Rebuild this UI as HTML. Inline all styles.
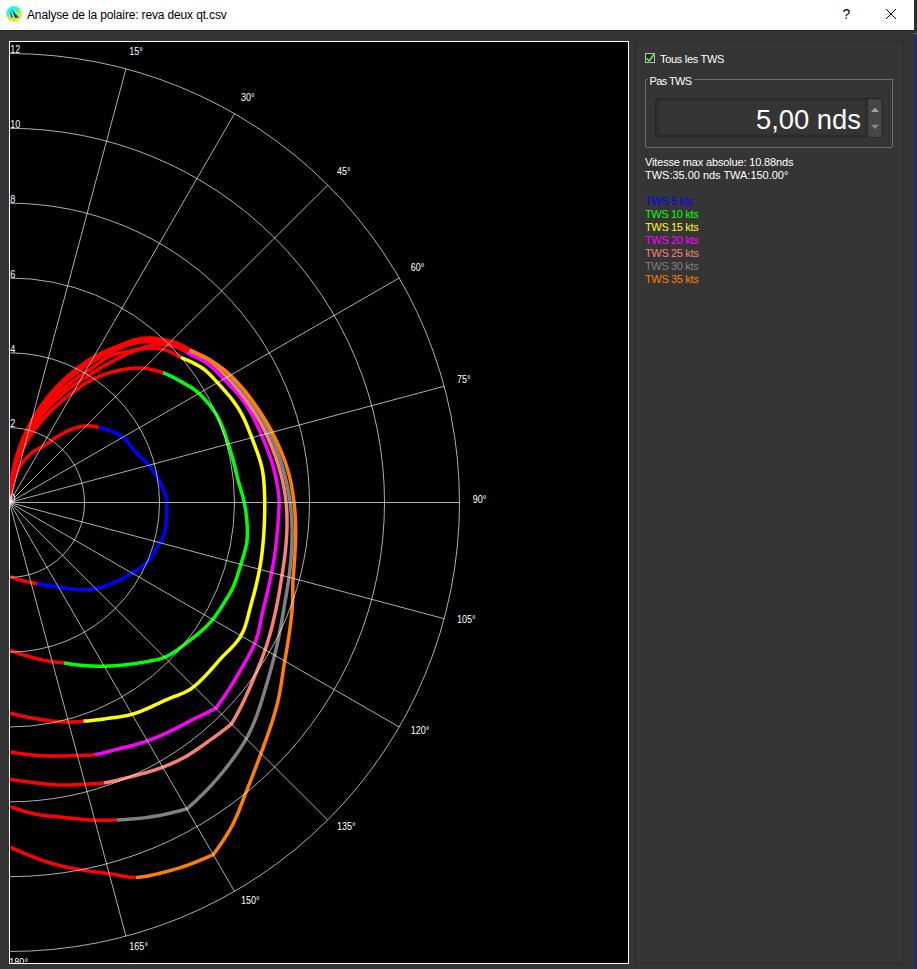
<!DOCTYPE html>
<html><head><meta charset="utf-8">
<style>
html,body{margin:0;padding:0;}
body{width:917px;height:969px;background:#353535;position:relative;overflow:hidden;font-family:"Liberation Sans",sans-serif;}
.abs{position:absolute;}
svg{position:absolute;left:0;top:0;}
svg text{font-family:"Liberation Sans",sans-serif;}
</style></head><body>
<!-- title bar -->
<div class="abs" style="left:0;top:0;width:914px;height:30px;background:#ffffff;"></div>
<div class="abs" style="left:0;top:30px;width:914px;height:1px;background:#2b2b2b;"></div>
<div class="abs" style="left:914px;top:0;width:3px;height:33px;background:#2e2e2e;"></div>
<div class="abs" style="left:914px;top:33px;width:3px;height:1px;background:#6e6e6e;"></div>
<div class="abs" style="left:914px;top:34px;width:1px;height:935px;background:#2d2c4a;"></div>
<div class="abs" style="left:915px;top:34px;width:2px;height:935px;background:#29297a;"></div>
<svg width="917" height="969" viewBox="0 0 917 969">
<defs>
<linearGradient id="ig" x1="0.2" y1="0.1" x2="0.6" y2="0.95">
<stop offset="0" stop-color="#00ffff"/><stop offset="0.35" stop-color="#40f0c0"/><stop offset="0.6" stop-color="#b0f040"/><stop offset="1" stop-color="#ffe000"/>
</linearGradient>
<clipPath id="cc"><rect x="10" y="42" width="618" height="921"/></clipPath>
</defs>
<circle cx="14" cy="14" r="7.7" fill="url(#ig)"/>
<path d="M11,8.8 Q14,12 19,17.8 L14.8,17.8 Q13,12 11,8.8 Z" fill="#0048e0"/>
<path d="M10,10.8 L13,17.4 L11,17.2 Q10.2,14 10,10.8 Z" fill="#0048e0"/>
<text x="27" y="19" font-size="12" fill="#000" style="letter-spacing:-0.15px">Analyse de la polaire: reva deux qt.csv</text>
<text x="842.6" y="19" font-size="14" fill="#000">?</text>
<path d="M886,9 L896,19 M896,9 L886,19" stroke="#000" stroke-width="1" fill="none"/>

<!-- chart -->
<rect x="9.5" y="41.5" width="619" height="922" fill="#000" stroke="#fff" stroke-width="1"/>
<g clip-path="url(#cc)">
<g stroke-width="3.5" fill="none" stroke-linejoin="round" stroke-linecap="butt">
<path d="M98.36,427.39 L99.34,427.62 L100.58,427.91 L101.83,428.22 L103.08,428.54 L104.34,428.87 L105.59,429.22 L106.85,429.59 L108.10,429.99 L109.34,430.40 L110.57,430.83 L111.79,431.29 L113.00,431.78 L114.19,432.29 L115.36,432.83 L116.50,433.40 L117.62,434.00 L118.71,434.63 L119.77,435.29 L120.80,435.99 L121.79,436.71 L122.17,437.01 L122.73,437.47 L123.64,438.26 L124.52,439.07 L125.38,439.91 L126.20,440.77 L127.00,441.64 L127.79,442.53 L128.56,443.44 L129.32,444.35 L130.07,445.28 L130.81,446.21 L131.56,447.15 L132.31,448.09 L133.07,449.03 L133.84,449.98 L134.62,450.92 L135.42,451.87 L136.08,452.62 L136.25,452.81 L137.12,453.74 L138.02,454.67 L138.96,455.60 L139.93,456.53 L140.91,457.46 L141.90,458.40 L142.90,459.35 L143.90,460.31 L144.90,461.29 L145.87,462.28 L146.83,463.29 L147.75,464.33 L148.29,464.95 L148.64,465.38 L149.53,466.44 L150.41,467.52 L151.29,468.60 L152.15,469.71 L153.00,470.82 L153.82,471.95 L154.63,473.10 L155.40,474.26 L156.15,475.43 L156.85,476.62 L157.12,477.10 L157.52,477.83 L158.19,479.04 L158.86,480.27 L159.52,481.50 L160.17,482.74 L160.81,484.00 L161.43,485.26 L162.04,486.53 L162.62,487.81 L163.17,489.11 L163.70,490.41 L164.19,491.72 L164.65,493.05 L165.07,494.38 L165.45,495.72 L165.78,497.06 L166.07,498.42 L166.30,499.77 L166.48,501.14 L166.60,502.50 L166.68,503.87 L166.74,505.23 L166.79,506.60 L166.81,507.97 L166.82,509.34 L166.81,510.71 L166.79,512.08 L166.74,513.45 L166.69,514.82 L166.61,516.19 L166.52,517.56 L166.42,518.93 L166.32,520.02 L166.30,520.30 L166.16,521.66 L166.02,523.03 L165.86,524.39 L165.69,525.75 L165.50,527.11 L165.30,528.47 L165.09,529.83 L164.85,531.18 L164.61,532.53 L164.34,533.88 L163.95,535.20 L163.38,536.48 L162.67,537.72 L161.88,538.94 L161.05,540.14 L160.24,541.33 L159.50,542.53 L159.36,542.77 L158.83,543.75 L158.18,544.96 L157.55,546.18 L156.92,547.39 L156.28,548.59 L155.65,549.79 L155.01,550.99 L154.36,552.17 L153.69,553.35 L153.00,554.51 L152.29,555.66 L151.55,556.80 L150.77,557.91 L149.96,559.01 L149.63,559.44 L149.11,560.08 L148.20,561.12 L147.24,562.13 L146.23,563.11 L145.18,564.06 L144.09,564.98 L142.97,565.88 L141.82,566.75 L140.65,567.59 L139.46,568.41 L138.26,569.22 L137.05,570.00 L135.83,570.77 L134.61,571.52 L133.40,572.26 L132.19,572.99 L131.00,573.72 L130.06,574.29 L129.82,574.44 L128.65,575.15 L127.47,575.84 L126.28,576.52 L125.10,577.18 L123.90,577.82 L122.71,578.46 L121.51,579.07 L120.31,579.67 L119.11,580.25 L117.90,580.82 L116.69,581.38 L115.49,581.91 L114.28,582.44 L113.31,582.85 L113.07,582.95 L111.87,583.45 L110.67,583.94 L109.47,584.41 L108.27,584.87 L107.07,585.32 L105.88,585.76 L104.68,586.17 L103.47,586.57 L102.27,586.95 L101.05,587.32 L99.83,587.65 L98.61,587.97 L97.37,588.26 L96.38,588.48 L96.13,588.53 L94.87,588.76 L93.61,588.97 L92.33,589.16 L91.06,589.31 L89.77,589.45 L88.49,589.56 L87.21,589.65 L85.92,589.72 L84.64,589.78 L83.37,589.82 L82.10,589.84 L80.84,589.85 L79.57,589.84 L78.31,589.80 L77.03,589.73 L75.76,589.63 L74.49,589.51 L73.22,589.37 L71.95,589.22 L70.70,589.04 L69.45,588.86 L68.22,588.66 L67.00,588.46 L65.79,588.26 L64.60,588.05 L63.43,587.85 L62.28,587.65 L61.15,587.46 L60.04,587.29 L58.96,587.13 L58.11,587.01 L57.90,586.99 L56.86,586.85 L55.82,586.71 L54.80,586.57 L53.79,586.43 L52.79,586.28 L51.80,586.13 L50.82,585.98 L49.85,585.83 L48.89,585.68 L47.94,585.52 L47.00,585.37 L46.06,585.21 L45.14,585.06 L44.23,584.90 L43.33,584.74 L42.43,584.59 L41.55,584.43 L40.67,584.27 L39.81,584.12 L38.95,583.97 L38.10,583.81 L37.26,583.66" stroke="#0000ff"/>
<path d="M162.64,372.68 L164.15,373.24 L166.01,373.98 L167.84,374.76 L169.65,375.59 L171.45,376.44 L173.22,377.33 L174.99,378.25 L176.74,379.19 L178.49,380.16 L180.24,381.14 L181.29,381.74 L182.00,382.14 L183.77,383.14 L185.56,384.15 L187.36,385.18 L189.14,386.23 L190.91,387.31 L192.64,388.44 L194.33,389.61 L195.96,390.83 L197.51,392.11 L198.98,393.45 L200.39,394.84 L201.79,396.24 L203.17,397.67 L204.53,399.12 L205.86,400.59 L207.17,402.09 L208.45,403.61 L209.70,405.15 L210.92,406.71 L212.11,408.30 L213.26,409.92 L214.37,411.55 L215.44,413.22 L216.47,414.90 L217.45,416.61 L218.39,418.35 L219.27,420.10 L219.78,421.17 L220.11,421.89 L220.91,423.68 L221.68,425.49 L222.42,427.31 L223.14,429.14 L223.84,430.98 L224.52,432.83 L225.17,434.69 L225.82,436.55 L226.45,438.41 L227.07,440.28 L227.69,442.16 L228.30,444.03 L228.91,445.91 L229.50,447.80 L230.08,449.69 L230.65,451.58 L231.20,453.48 L231.75,455.39 L232.29,457.30 L232.81,459.21 L233.33,461.13 L233.84,463.05 L234.34,464.98 L234.83,466.91 L235.31,468.84 L235.79,470.78 L236.26,472.73 L236.72,474.67 L237.18,476.63 L237.28,477.02 L237.65,478.58 L238.17,480.54 L238.71,482.50 L239.28,484.46 L239.87,486.43 L240.46,488.41 L241.06,490.40 L241.65,492.39 L242.22,494.39 L242.77,496.41 L243.29,498.43 L243.77,500.46 L244.20,502.50 L244.60,504.55 L244.99,506.60 L245.36,508.66 L245.71,510.73 L246.02,512.80 L246.30,514.88 L246.55,516.96 L246.74,519.05 L246.83,520.30 L246.89,521.14 L247.02,523.23 L247.14,525.32 L247.25,527.43 L247.33,529.53 L247.37,531.63 L247.37,533.74 L247.32,535.84 L247.21,537.94 L247.04,540.03 L246.79,542.11 L246.53,543.76 L246.45,544.18 L246.05,546.23 L245.58,548.27 L245.06,550.30 L244.50,552.32 L243.92,554.34 L243.31,556.34 L242.69,558.34 L242.07,560.34 L241.46,562.33 L240.86,564.33 L240.27,566.33 L239.68,568.33 L239.07,570.32 L238.45,572.31 L237.81,574.30 L237.16,576.28 L236.48,578.25 L235.79,580.21 L235.07,582.17 L234.33,584.11 L234.02,584.89 L233.55,586.04 L232.69,587.95 L231.77,589.82 L230.79,591.66 L229.76,593.49 L228.70,595.29 L227.61,597.08 L226.51,598.85 L225.41,600.62 L224.30,602.39 L224.09,602.74 L223.21,604.15 L222.11,605.91 L221.00,607.65 L219.88,609.39 L218.74,611.11 L217.58,612.82 L216.40,614.51 L215.19,616.18 L213.94,617.83 L212.66,619.45 L211.34,621.04 L209.98,622.60 L208.57,624.12 L207.12,625.61 L205.65,627.08 L204.14,628.51 L202.60,629.91 L201.04,631.29 L199.47,632.65 L197.88,633.98 L196.27,635.30 L194.66,636.59 L193.04,637.87 L191.42,639.14 L189.80,640.39 L188.19,641.64 L186.58,642.88 L184.98,644.12 L183.39,645.35 L181.79,646.56 L180.19,647.77 L178.57,648.95 L176.94,650.11 L175.29,651.24 L173.62,652.34 L171.93,653.40 L170.20,654.43 L168.44,655.41 L166.65,656.34 L164.81,657.21 L162.90,657.99 L160.89,658.65 L158.81,659.21 L156.68,659.69 L154.53,660.12 L152.39,660.53 L150.27,660.93 L149.02,661.18 L148.19,661.36 L146.12,661.76 L144.06,662.14 L141.99,662.50 L139.93,662.83 L137.88,663.14 L135.84,663.44 L133.80,663.71 L131.78,663.98 L129.78,664.23 L129.38,664.28 L127.78,664.48 L125.80,664.71 L123.83,664.92 L121.87,665.12 L119.92,665.31 L117.97,665.48 L116.04,665.63 L114.11,665.77 L112.19,665.88 L110.28,665.99 L108.38,666.07 L106.49,666.13 L104.60,666.18 L102.72,666.21 L100.85,666.22 L98.99,666.21 L97.13,666.19 L95.29,666.15 L93.46,666.10 L91.63,666.03 L89.82,665.94 L88.01,665.85 L86.22,665.74 L85.15,665.67 L84.44,665.62 L82.66,665.47 L80.89,665.30 L79.12,665.11 L77.37,664.90 L75.62,664.67 L73.89,664.44 L72.17,664.20 L70.47,663.96 L68.78,663.71 L67.10,663.47 L65.45,663.24 L63.81,663.02" stroke="#00ff00"/>
<path d="M180.76,357.26 L182.33,357.99 L184.34,358.87 L186.40,359.74 L188.46,360.63 L190.49,361.56 L191.69,362.15 L192.48,362.56 L194.46,363.57 L196.45,364.61 L198.42,365.68 L200.34,366.80 L202.20,367.99 L203.97,369.26 L204.65,369.79 L205.63,370.61 L207.23,372.02 L208.78,373.47 L210.29,374.97 L211.76,376.49 L213.21,378.04 L214.64,379.60 L216.07,381.17 L217.51,382.75 L218.96,384.33 L220.42,385.92 L221.87,387.52 L223.33,389.13 L224.77,390.75 L226.21,392.39 L227.63,394.04 L229.04,395.72 L230.43,397.41 L231.79,399.12 L233.13,400.86 L234.43,402.62 L235.70,404.41 L236.94,406.21 L238.13,408.05 L239.27,409.91 L240.36,411.80 L240.79,412.56 L241.41,413.71 L242.41,415.64 L243.38,417.59 L244.32,419.56 L245.22,421.54 L246.10,423.53 L246.96,425.54 L247.80,427.55 L248.62,429.58 L249.42,431.61 L250.21,433.65 L251.00,435.69 L251.77,437.74 L252.56,439.80 L253.34,441.85 L254.14,443.91 L254.92,445.98 L255.71,448.05 L256.48,450.13 L257.24,452.22 L257.97,454.32 L258.69,456.43 L259.37,458.55 L260.02,460.68 L260.64,462.82 L261.21,464.97 L261.74,467.13 L262.22,469.31 L262.64,471.49 L263.00,473.69 L263.30,475.89 L263.44,477.21 L263.53,478.10 L263.73,480.31 L263.92,482.52 L264.08,484.74 L264.23,486.96 L264.35,489.18 L264.46,491.39 L264.54,493.61 L264.61,495.84 L264.66,498.06 L264.69,500.28 L264.70,502.50 L264.70,504.72 L264.70,506.94 L264.69,509.17 L264.68,511.39 L264.65,513.61 L264.61,515.84 L264.55,518.06 L264.48,520.29 L264.39,522.51 L264.29,524.74 L264.18,526.97 L264.06,529.19 L263.93,531.42 L263.79,533.65 L263.64,535.88 L263.47,538.11 L263.29,540.34 L263.10,542.57 L262.89,544.80 L262.67,547.04 L262.43,549.27 L262.18,551.50 L261.91,553.73 L261.62,555.96 L261.32,558.19 L260.99,560.42 L260.65,562.65 L260.29,564.88 L259.91,567.10 L259.50,569.33 L259.08,571.55 L258.64,573.77 L258.19,575.99 L257.72,578.20 L257.23,580.42 L256.73,582.64 L256.22,584.85 L255.69,587.06 L255.15,589.28 L254.59,591.49 L254.02,593.70 L253.43,595.91 L252.83,598.12 L252.22,600.32 L251.60,602.53 L251.34,603.41 L250.97,604.74 L250.37,606.97 L249.80,609.22 L249.24,611.48 L248.68,613.75 L248.12,616.03 L247.53,618.30 L246.91,620.57 L246.26,622.83 L245.55,625.07 L244.78,627.28 L243.94,629.46 L243.02,631.61 L242.01,633.71 L240.90,635.75 L239.68,637.73 L238.36,639.65 L236.95,641.51 L235.46,643.32 L233.92,645.09 L232.33,646.82 L230.70,648.51 L229.05,650.18 L227.39,651.84 L225.73,653.49 L224.08,655.13 L222.46,656.79 L220.88,658.47 L219.34,660.18 L217.83,661.90 L216.33,663.62 L214.82,665.34 L213.31,667.06 L211.80,668.77 L210.27,670.47 L208.74,672.16 L207.19,673.83 L205.63,675.49 L204.05,677.14 L202.45,678.76 L200.83,680.36 L199.19,681.94 L197.52,683.49 L195.82,685.00 L194.09,686.49 L192.29,687.90 L190.39,689.20 L188.41,690.40 L186.35,691.51 L184.24,692.54 L182.09,693.51 L179.90,694.43 L177.70,695.30 L175.49,696.15 L173.29,696.98 L171.10,697.81 L168.94,698.66 L166.83,699.53 L164.75,700.45 L162.72,701.40 L160.69,702.35 L158.68,703.30 L156.68,704.24 L154.68,705.19 L152.68,706.12 L150.68,707.04 L148.67,707.94 L146.67,708.83 L144.65,709.69 L142.63,710.52 L140.59,711.33 L138.54,712.10 L136.48,712.83 L134.40,713.52 L132.30,714.16 L130.18,714.74 L128.04,715.26 L125.88,715.73 L123.70,716.15 L121.52,716.53 L119.33,716.88 L117.14,717.20 L114.96,717.50 L112.78,717.78 L110.62,718.06 L108.47,718.35 L106.33,718.64 L104.21,718.94 L102.10,719.23 L99.99,719.51 L97.89,719.78 L95.79,720.04 L93.70,720.29 L91.61,720.52 L89.53,720.73 L87.45,720.93 L85.37,721.11 L83.30,721.28" stroke="#ffff00"/>
<path d="M186.56,352.32 L188.05,353.18 L190.00,354.20 L192.02,355.18 L194.09,356.15 L196.18,357.12 L198.27,358.11 L200.34,359.14 L202.37,360.23 L204.33,361.39 L206.19,362.63 L206.55,362.89 L207.95,363.96 L209.67,365.34 L211.34,366.76 L212.97,368.23 L214.56,369.72 L216.14,371.24 L217.69,372.79 L219.23,374.35 L220.76,375.92 L222.29,377.51 L223.84,379.10 L225.39,380.70 L226.94,382.30 L228.50,383.92 L230.05,385.55 L231.59,387.20 L233.13,388.86 L234.65,390.54 L236.16,392.24 L237.65,393.96 L239.12,395.71 L240.55,397.48 L241.96,399.27 L243.34,401.08 L244.68,402.93 L245.98,404.80 L247.23,406.69 L247.96,407.84 L248.43,408.62 L249.60,410.56 L250.73,412.53 L251.83,414.52 L252.89,416.52 L253.93,418.54 L254.94,420.58 L255.93,422.63 L256.90,424.69 L257.85,426.76 L258.78,428.84 L259.71,430.93 L260.62,433.02 L261.53,435.13 L262.43,437.24 L263.33,439.36 L264.22,441.49 L265.10,443.63 L265.96,445.78 L266.81,447.93 L267.64,450.10 L268.46,452.28 L269.25,454.47 L270.02,456.67 L270.77,458.88 L271.49,461.10 L272.19,463.33 L272.86,465.57 L273.49,467.82 L274.09,470.09 L274.65,472.36 L275.18,474.64 L275.67,476.93 L276.14,479.22 L276.60,481.53 L277.04,483.83 L277.46,486.15 L277.85,488.47 L278.20,490.79 L278.50,493.13 L278.75,495.47 L278.94,497.81 L279.06,500.15 L279.10,502.50 L279.08,504.85 L279.01,507.19 L278.90,509.54 L278.77,511.88 L278.63,514.22 L278.47,516.56 L278.30,518.90 L278.21,520.31 L278.15,521.24 L277.98,523.58 L277.81,525.92 L277.63,528.26 L277.43,530.60 L277.23,532.94 L277.01,535.27 L276.79,537.61 L276.55,539.95 L276.29,542.28 L276.03,544.62 L275.75,546.95 L275.45,549.29 L275.14,551.62 L274.81,553.95 L274.47,556.29 L274.11,558.62 L273.73,560.95 L273.34,563.27 L272.93,565.60 L272.50,567.92 L272.05,570.24 L271.58,572.56 L271.09,574.88 L270.61,577.20 L270.12,579.52 L269.63,581.85 L269.13,584.17 L268.62,586.50 L268.11,588.83 L267.59,591.16 L267.06,593.50 L266.53,595.83 L265.98,598.17 L265.42,600.51 L264.85,602.85 L264.27,605.19 L263.67,607.53 L263.43,608.47 L263.07,609.88 L262.52,612.25 L262.00,614.65 L261.50,617.07 L261.02,619.50 L260.53,621.95 L260.04,624.41 L259.53,626.86 L259.00,629.32 L258.42,631.77 L257.79,634.20 L257.10,636.61 L256.34,638.99 L255.50,641.34 L254.58,643.65 L253.58,645.92 L252.54,648.17 L251.45,650.40 L250.33,652.61 L249.17,654.80 L247.99,656.98 L246.78,659.15 L245.55,661.31 L244.31,663.47 L243.06,665.62 L241.81,667.77 L240.55,669.93 L240.30,670.36 L239.29,672.09 L238.02,674.25 L236.75,676.41 L235.47,678.58 L234.17,680.73 L232.87,682.89 L231.55,685.05 L230.21,687.19 L228.86,689.34 L227.49,691.48 L226.10,693.60 L224.70,695.73 L223.27,697.84 L221.82,699.94 L220.35,702.02 L218.86,704.10 L217.34,706.16 L215.80,708.20 L213.47,709.45 L211.12,710.66 L208.75,711.83 L206.38,712.98 L204.00,714.11 L201.64,715.23 L199.29,716.34 L196.96,717.46 L194.66,718.59 L192.84,719.51 L192.39,719.74 L190.14,720.91 L187.92,722.09 L185.70,723.26 L183.50,724.44 L181.29,725.59 L179.07,726.74 L178.19,727.19 L176.85,727.85 L174.63,728.96 L172.42,730.06 L170.20,731.14 L167.98,732.21 L165.75,733.26 L163.52,734.29 L161.29,735.31 L159.04,736.30 L156.79,737.26 L154.54,738.20 L152.27,739.11 L149.99,739.99 L147.70,740.83 L145.40,741.64 L143.08,742.40 L140.75,743.12 L138.41,743.82 L136.06,744.48 L133.72,745.11 L131.37,745.72 L129.02,746.32 L126.67,746.90 L124.33,747.48 L122.00,748.05 L119.68,748.61 L117.36,749.19 L115.52,749.66 L115.06,749.77 L112.77,750.38 L110.50,750.99 L108.22,751.60 L105.95,752.20 L103.68,752.78 L101.40,753.33 L99.10,753.84 L96.80,754.29 L94.94,754.61 L94.48,754.68" stroke="#ff00ff"/>
<path d="M188.76,350.45 L190.48,351.15 L192.64,352.03 L194.81,352.93 L196.97,353.86 L199.11,354.83 L201.23,355.84 L203.31,356.91 L205.34,358.03 L207.30,359.22 L209.20,360.48 L210.30,361.27 L211.02,361.82 L212.78,363.21 L214.48,364.64 L216.15,366.12 L217.78,367.63 L219.38,369.17 L220.96,370.74 L222.51,372.33 L224.05,373.94 L225.59,375.57 L227.13,377.20 L228.66,378.85 L230.18,380.51 L231.69,382.19 L233.18,383.88 L234.66,385.60 L236.13,387.33 L237.59,389.08 L239.03,390.84 L240.45,392.63 L241.86,394.43 L243.26,396.24 L244.63,398.08 L245.99,399.93 L247.34,401.80 L248.67,403.68 L249.97,405.58 L251.26,407.50 L252.54,409.44 L253.79,411.39 L255.02,413.36 L256.23,415.34 L257.42,417.34 L258.60,419.35 L259.75,421.39 L260.87,423.43 L261.98,425.49 L263.06,427.57 L264.12,429.66 L265.16,431.77 L266.17,433.89 L267.16,436.02 L268.13,438.17 L269.09,440.32 L270.03,442.49 L270.95,444.67 L271.85,446.86 L272.72,449.07 L273.58,451.28 L274.42,453.51 L275.24,455.75 L276.03,458.00 L276.80,460.26 L277.55,462.53 L278.27,464.81 L278.97,467.10 L279.64,469.40 L280.29,471.72 L280.91,474.04 L281.51,476.37 L282.07,478.71 L282.61,481.05 L283.12,483.41 L283.60,485.77 L284.05,488.14 L284.47,490.52 L284.86,492.91 L285.22,495.30 L285.55,497.69 L285.84,500.09 L286.10,502.50 L286.33,504.91 L286.52,507.32 L286.68,509.74 L286.81,512.16 L286.91,514.59 L286.99,517.01 L287.03,519.44 L287.04,521.87 L287.03,524.29 L286.99,526.72 L286.93,529.16 L286.84,531.59 L286.72,534.02 L286.59,536.45 L286.43,538.88 L286.25,541.31 L286.06,543.74 L285.84,546.17 L285.60,548.60 L285.35,551.03 L285.08,553.46 L284.79,555.89 L284.49,558.32 L284.17,560.76 L283.84,563.19 L283.49,565.62 L283.14,568.05 L282.77,570.48 L282.40,572.92 L282.01,575.36 L281.62,577.80 L281.23,580.24 L280.84,582.70 L280.44,585.15 L280.04,587.61 L279.63,590.07 L279.21,592.54 L278.77,595.01 L278.32,597.48 L277.86,599.95 L277.37,602.43 L277.17,603.42 L276.86,604.90 L276.35,607.38 L275.83,609.86 L275.29,612.35 L274.74,614.84 L274.18,617.33 L273.61,619.82 L273.02,622.32 L272.41,624.82 L271.78,627.32 L271.14,629.82 L270.47,632.32 L269.78,634.82 L269.07,637.31 L268.34,639.81 L267.58,642.30 L266.80,644.79 L265.98,647.27 L265.14,649.75 L264.28,652.22 L263.38,654.69 L262.46,657.14 L261.51,659.60 L260.55,662.05 L259.56,664.50 L258.56,666.95 L257.55,669.41 L256.53,671.87 L255.50,674.33 L255.08,675.31 L254.46,676.80 L253.41,679.27 L252.35,681.76 L251.28,684.24 L250.20,686.73 L249.10,689.23 L247.99,691.73 L246.86,694.23 L245.72,696.73 L244.55,699.23 L243.36,701.72 L242.15,704.22 L240.91,706.71 L239.65,709.19 L238.37,711.67 L237.05,714.14 L235.71,716.59 L234.34,719.04 L232.93,721.48 L231.50,723.90 L229.38,725.64 L227.24,727.35 L225.08,729.04 L222.91,730.71 L220.73,732.36 L218.54,733.99 L216.34,735.61 L214.14,737.22 L211.93,738.81 L209.72,740.40 L207.96,741.67 L207.52,741.98 L205.31,743.57 L203.11,745.15 L200.90,746.72 L198.69,748.27 L196.46,749.81 L194.22,751.32 L191.96,752.80 L189.67,754.25 L187.36,755.65 L186.89,755.93 L185.02,757.00 L182.64,758.30 L180.23,759.53 L177.79,760.72 L175.33,761.86 L172.86,762.97 L170.37,764.03 L167.87,765.07 L165.36,766.08 L162.85,767.07 L160.33,768.03 L157.79,768.95 L155.24,769.82 L152.68,770.65 L150.11,771.45 L147.53,772.22 L144.95,772.96 L142.36,773.68 L139.78,774.38 L137.20,775.06 L134.62,775.74 L132.05,776.40 L129.49,777.07 L126.93,777.73 L124.38,778.40 L121.84,779.06 L119.30,779.71 L116.75,780.34 L114.21,780.94 L111.65,781.51 L109.09,782.03 L106.51,782.50 L103.93,782.92" stroke="#fa8072"/>
<path d="M189.21,350.06 L190.87,350.82 L192.97,351.75 L195.10,352.69 L197.25,353.63 L199.40,354.60 L201.54,355.60 L203.67,356.64 L205.76,357.72 L207.81,358.86 L209.79,360.06 L210.95,360.81 L211.72,361.33 L213.59,362.64 L215.44,364.00 L217.26,365.39 L219.04,366.81 L220.80,368.27 L222.52,369.76 L224.23,371.28 L225.91,372.83 L227.57,374.40 L229.20,376.00 L230.82,377.62 L232.43,379.26 L234.01,380.93 L235.58,382.61 L237.13,384.32 L238.66,386.04 L240.17,387.79 L241.66,389.56 L243.14,391.35 L244.59,393.15 L246.03,394.98 L247.44,396.83 L248.84,398.69 L250.22,400.58 L251.58,402.48 L252.91,404.40 L254.23,406.33 L255.53,408.29 L256.80,410.26 L258.06,412.25 L259.29,414.26 L260.51,416.28 L261.70,418.32 L262.87,420.37 L264.02,422.44 L265.15,424.52 L266.26,426.62 L267.34,428.74 L268.41,430.86 L269.45,433.01 L270.47,435.16 L271.47,437.33 L272.45,439.52 L273.40,441.71 L274.34,443.92 L275.25,446.14 L276.13,448.37 L277.00,450.62 L277.84,452.88 L278.66,455.15 L279.46,457.43 L280.23,459.72 L280.98,462.02 L281.71,464.33 L282.41,466.65 L283.09,468.98 L283.75,471.32 L284.38,473.67 L284.99,476.03 L285.58,478.40 L286.14,480.78 L286.68,483.16 L287.19,485.55 L287.68,487.95 L288.14,490.36 L288.58,492.78 L289.00,495.20 L289.39,497.62 L289.76,500.06 L290.10,502.50 L290.42,504.95 L290.70,507.40 L290.96,509.85 L291.19,512.32 L291.39,514.78 L291.57,517.25 L291.72,519.72 L291.84,522.20 L291.94,524.68 L292.01,527.16 L292.06,529.65 L292.08,532.14 L292.08,534.63 L292.06,537.12 L292.02,539.61 L291.95,542.11 L291.86,544.61 L291.75,547.11 L291.62,549.61 L291.47,552.11 L291.30,554.62 L291.11,557.12 L290.90,559.63 L290.67,562.14 L290.43,564.65 L290.17,567.16 L289.89,569.67 L289.60,572.19 L289.29,574.70 L288.96,577.22 L288.62,579.74 L288.25,582.26 L287.87,584.78 L287.47,587.30 L287.06,589.82 L286.63,592.35 L286.21,594.88 L285.78,597.42 L285.35,599.97 L284.92,602.53 L284.50,605.09 L284.07,607.67 L283.64,610.25 L283.20,612.84 L282.76,615.44 L282.32,618.05 L281.86,620.66 L281.39,623.29 L280.92,625.92 L280.43,628.56 L279.93,631.20 L279.41,633.85 L278.87,636.51 L278.32,639.17 L277.75,641.83 L277.16,644.50 L276.55,647.17 L275.92,649.85 L275.26,652.52 L274.58,655.20 L273.89,657.88 L273.19,660.58 L272.48,663.29 L271.77,666.01 L271.04,668.74 L270.30,671.48 L269.55,674.22 L268.77,676.98 L267.98,679.74 L267.16,682.50 L267.00,683.05 L266.34,685.27 L265.51,688.06 L264.67,690.87 L263.83,693.70 L262.98,696.54 L262.11,699.39 L261.22,702.25 L260.31,705.12 L259.37,707.98 L258.40,710.85 L257.39,713.71 L256.35,716.56 L255.27,719.41 L254.14,722.23 L252.96,725.04 L251.74,727.83 L250.46,730.59 L249.12,733.32 L247.73,736.02 L246.27,738.67 L244.76,741.29 L243.20,743.88 L241.58,746.43 L239.93,748.96 L238.23,751.47 L236.51,753.95 L234.75,756.42 L232.96,758.87 L231.15,761.31 L229.68,763.26 L229.31,763.75 L227.46,766.17 L225.57,768.58 L223.66,770.98 L221.71,773.35 L219.74,775.71 L217.74,778.05 L215.72,780.38 L213.66,782.68 L211.58,784.97 L209.48,787.24 L207.34,789.48 L205.17,791.71 L202.98,793.91 L200.76,796.10 L198.52,798.26 L196.25,800.40 L193.96,802.53 L191.64,804.64 L189.31,806.73 L186.95,808.81 L183.89,809.67 L180.82,810.49 L177.76,811.29 L174.70,812.06 L171.63,812.81 L168.57,813.52 L165.50,814.19 L162.44,814.84 L159.37,815.44 L156.29,816.01 L153.22,816.54 L150.14,817.03 L147.06,817.48 L143.97,817.88 L140.88,818.24 L137.80,818.56 L134.71,818.85 L131.63,819.10 L128.55,819.32 L125.48,819.51 L122.42,819.68 L119.37,819.83 L117.54,819.91 L116.32,819.96" stroke="#808080"/>
<path d="M189.59,349.74 L191.18,350.55 L193.22,351.55 L195.30,352.53 L197.41,353.51 L199.53,354.50 L201.67,355.51 L203.79,356.54 L205.90,357.61 L207.98,358.73 L210.01,359.91 L211.20,360.64 L211.98,361.14 L213.93,362.41 L215.86,363.71 L217.77,365.04 L219.66,366.41 L221.53,367.81 L223.37,369.24 L225.18,370.70 L226.96,372.20 L228.70,373.73 L230.42,375.30 L232.10,376.90 L233.75,378.53 L235.37,380.19 L236.97,381.87 L238.54,383.58 L240.09,385.32 L241.61,387.07 L243.11,388.85 L244.59,390.65 L246.05,392.47 L247.49,394.31 L248.92,396.17 L250.33,398.05 L251.72,399.94 L253.10,401.85 L254.47,403.77 L255.83,405.71 L257.18,407.66 L258.25,409.23 L258.52,409.62 L259.85,411.60 L261.16,413.59 L262.47,415.60 L263.75,417.63 L265.02,419.67 L266.26,421.73 L267.49,423.81 L268.70,425.90 L269.88,428.01 L271.03,430.14 L272.16,432.28 L273.26,434.44 L274.35,436.61 L275.42,438.80 L276.48,441.00 L277.52,443.22 L278.53,445.44 L279.53,447.68 L280.50,449.94 L281.45,452.21 L282.37,454.49 L283.26,456.79 L284.13,459.10 L284.97,461.42 L285.77,463.76 L286.54,466.11 L287.28,468.47 L287.99,470.84 L288.66,473.22 L289.29,475.62 L289.64,477.06 L289.88,478.02 L290.43,480.44 L290.94,482.86 L291.41,485.29 L291.86,487.73 L292.27,490.18 L292.66,492.63 L293.02,495.09 L293.36,497.56 L293.69,500.03 L294.00,502.50 L294.29,504.98 L294.55,507.47 L294.77,509.95 L294.97,512.45 L295.14,514.95 L295.28,517.45 L295.40,519.95 L295.49,522.46 L295.55,524.97 L295.59,527.48 L295.61,529.99 L295.61,532.51 L295.59,535.03 L295.55,537.55 L295.49,540.07 L295.41,542.60 L295.32,545.13 L295.21,547.66 L295.09,550.19 L294.96,552.73 L294.81,555.27 L294.65,557.81 L294.49,560.36 L294.31,562.91 L294.13,565.47 L293.93,568.03 L293.74,570.60 L293.53,573.17 L293.33,575.75 L293.12,578.33 L292.95,580.94 L292.85,583.58 L292.81,586.24 L292.79,588.93 L292.79,591.63 L292.78,594.35 L292.75,597.07 L292.66,599.79 L292.64,600.34 L292.53,602.51 L292.36,605.24 L292.17,607.96 L291.95,610.69 L291.70,613.43 L291.43,616.16 L291.13,618.91 L290.81,621.66 L290.48,624.41 L290.12,627.17 L289.74,629.94 L289.35,632.71 L288.94,635.50 L288.51,638.29 L288.07,641.09 L287.62,643.91 L287.16,646.73 L286.69,649.57 L286.21,652.41 L285.72,655.28 L285.22,658.16 L284.72,661.05 L284.22,663.97 L283.75,666.93 L283.30,669.92 L282.85,672.94 L282.41,675.98 L281.95,679.04 L281.48,682.13 L280.99,685.22 L280.48,688.32 L279.92,691.43 L279.33,694.54 L278.68,697.64 L278.13,700.11 L277.99,700.72 L277.24,703.80 L276.45,706.88 L275.62,709.95 L274.75,713.01 L273.85,716.08 L272.91,719.15 L271.94,722.21 L270.95,725.28 L269.92,728.36 L268.87,731.44 L267.80,734.53 L266.71,737.64 L265.59,740.75 L264.46,743.88 L263.32,747.03 L262.16,750.19 L260.98,753.38 L259.79,756.59 L258.59,759.82 L257.38,763.08 L256.14,766.35 L254.89,769.64 L253.62,772.96 L252.34,776.30 L251.03,779.66 L249.70,783.03 L248.35,786.43 L246.97,789.85 L246.41,791.22 L245.58,793.30 L244.21,796.82 L242.85,800.41 L241.48,804.04 L240.08,807.69 L238.64,811.35 L237.14,814.99 L235.57,818.59 L233.91,822.13 L232.16,825.59 L231.79,826.27 L230.30,828.97 L228.37,832.28 L226.37,835.53 L224.31,838.75 L222.20,841.93 L220.04,845.09 L217.84,848.24 L215.61,851.39 L213.35,854.54 L210.10,856.00 L206.85,857.44 L203.58,858.85 L200.31,860.23 L197.02,861.57 L193.72,862.88 L190.40,864.13 L187.07,865.34 L183.72,866.50 L180.35,867.61 L176.97,868.66 L173.58,869.67 L170.17,870.64 L166.75,871.55 L163.33,872.42 L159.90,873.26 L156.47,874.08 L153.03,874.85 L149.58,875.56 L146.11,876.20 L142.62,876.73 L139.10,877.15 L137.68,877.28 L135.54,877.39" stroke="#ff7f00"/>
<path d="M10.10,502.50 L10.11,501.25 L10.14,499.98 L10.20,498.72 L10.28,497.44 L10.38,496.17 L10.50,494.89 L10.64,493.61 L10.81,492.33 L11.00,491.05 L11.21,489.78 L11.45,488.51 L11.70,487.25 L11.98,485.99 L12.28,484.75 L12.60,483.51 L12.94,482.29 L13.30,481.07 L13.68,479.88 L14.08,478.70 L14.50,477.53 L14.94,476.39 L15.39,475.26 L15.87,474.16 L16.35,473.07 L16.76,472.22 L16.86,472.01 L17.38,470.97 L17.92,469.94 L18.47,468.92 L19.04,467.92 L19.63,466.93 L20.23,465.96 L20.85,465.01 L21.48,464.07 L22.13,463.14 L22.79,462.24 L23.47,461.35 L24.16,460.48 L24.86,459.63 L25.58,458.80 L26.30,457.99 L27.04,457.20 L27.79,456.43 L28.54,455.68 L29.31,454.95 L30.09,454.24 L30.56,453.83 L30.88,453.56 L31.66,452.92 L32.43,452.34 L33.21,451.79 L33.98,451.28 L34.76,450.80 L35.54,450.33 L36.34,449.88 L37.14,449.43 L37.96,448.98 L38.80,448.52 L39.67,448.04 L40.56,447.54 L41.49,447.01 L42.46,446.45 L43.47,445.85 L44.10,445.47 L44.53,445.20 L45.67,444.46 L46.88,443.64 L48.16,442.75 L49.50,441.83 L50.89,440.87 L52.32,439.91 L53.78,438.95 L55.25,438.01 L56.44,437.29 L56.74,437.11 L58.28,436.18 L59.89,435.22 L61.54,434.23 L63.24,433.25 L64.95,432.30 L66.66,431.39 L68.36,430.56 L70.02,429.81 L71.62,429.18 L71.94,429.07 L73.18,428.64 L74.73,428.15 L76.28,427.70 L77.82,427.29 L79.35,426.93 L80.86,426.62 L82.36,426.36 L83.83,426.15 L85.28,425.99 L86.71,425.89 L88.10,425.85 L89.46,425.86 L90.00,425.88 L90.78,425.93 L92.05,426.08 L93.28,426.28 L94.49,426.51 L95.69,426.78 L96.89,427.05 L98.11,427.33 L98.36,427.39" stroke="#ff0000"/>
<path d="M37.26,583.66 L36.42,583.51 L36.26,583.48 L35.60,583.36 L34.78,583.21 L33.96,583.06 L33.16,582.92 L32.36,582.77 L31.57,582.62 L30.78,582.47 L30.00,582.32 L29.23,582.16 L28.46,582.01 L27.69,581.85 L26.93,581.69 L26.18,581.53 L25.43,581.37 L24.69,581.20 L23.95,581.03 L23.21,580.86 L22.48,580.68 L21.76,580.50 L21.04,580.31 L20.32,580.12 L19.61,579.92 L18.90,579.72 L18.19,579.51 L17.49,579.29 L16.80,579.07 L16.11,578.84 L15.42,578.60 L14.74,578.36 L14.06,578.10 L13.39,577.84 L12.72,577.57 L12.06,577.29 L11.40,577.01 L10.75,576.71 L10.10,576.40" stroke="#ff0000"/>
<path d="M10.10,502.50 L10.12,500.38 L10.17,498.27 L10.27,496.17 L10.39,494.08 L10.56,492.00 L10.76,489.93 L11.00,487.87 L11.27,485.81 L11.57,483.77 L11.92,481.73 L12.30,479.70 L12.71,477.68 L13.16,475.67 L13.64,473.67 L14.16,471.68 L14.71,469.69 L15.30,467.72 L15.92,465.75 L16.58,463.80 L17.27,461.85 L17.99,459.91 L18.75,457.98 L19.55,456.05 L20.38,454.14 L21.24,452.23 L22.14,450.34 L23.08,448.45 L24.04,446.57 L25.05,444.70 L26.09,442.84 L27.16,440.99 L28.27,439.14 L29.41,437.31 L30.59,435.48 L31.80,433.67 L33.05,431.86 L34.34,430.06 L35.66,428.27 L37.02,426.49 L38.41,424.72 L39.84,422.95 L41.31,421.20 L42.81,419.46 L44.35,417.72 L45.93,416.00 L47.55,414.28 L49.20,412.58 L50.89,410.89 L52.62,409.20 L54.39,407.53 L56.19,405.86 L58.04,404.21 L59.92,402.57 L61.85,400.94 L63.81,399.32 L65.82,397.71 L67.04,396.75 L67.86,396.11 L69.99,394.45 L72.20,392.74 L74.47,391.01 L76.80,389.27 L79.17,387.56 L81.56,385.89 L83.97,384.28 L86.38,382.77 L88.77,381.36 L91.12,380.09 L93.45,378.92 L95.78,377.83 L98.11,376.81 L100.43,375.87 L102.75,374.98 L105.06,374.16 L107.38,373.40 L109.70,372.70 L112.02,372.04 L113.42,371.68 L114.35,371.44 L116.69,370.87 L119.05,370.33 L121.42,369.83 L123.79,369.38 L126.16,368.99 L128.52,368.65 L130.87,368.37 L133.19,368.17 L135.49,368.04 L137.75,367.99 L139.96,368.03 L141.26,368.09 L142.12,368.15 L144.25,368.35 L146.35,368.61 L148.42,368.92 L150.47,369.29 L152.49,369.72 L154.49,370.19 L156.46,370.72 L158.41,371.28 L160.34,371.90 L162.26,372.55 L162.64,372.68" stroke="#ff0000"/>
<path d="M63.81,663.02 L62.51,662.85 L62.19,662.81 L60.59,662.62 L59.00,662.45 L57.43,662.28 L55.87,662.12 L54.32,661.95 L52.78,661.77 L51.24,661.57 L49.70,661.34 L48.17,661.08 L46.65,660.82 L45.13,660.53 L43.63,660.23 L42.13,659.91 L40.63,659.58 L39.15,659.24 L37.68,658.89 L36.21,658.52 L34.75,658.15 L33.30,657.76 L31.87,657.37 L30.44,656.98 L29.02,656.57 L28.45,656.41 L27.61,656.16 L26.21,655.75 L24.82,655.33 L23.43,654.90 L22.06,654.47 L20.70,654.03 L19.34,653.58 L17.99,653.12 L16.66,652.64 L15.33,652.16 L14.01,651.67 L12.69,651.16 L11.39,650.64 L10.10,650.10" stroke="#ff0000"/>
<path d="M10.10,502.50 L10.12,500.16 L10.18,497.82 L10.28,495.48 L10.43,493.14 L10.61,490.81 L10.83,488.48 L11.10,486.16 L11.40,483.84 L11.75,481.52 L12.14,479.22 L12.56,476.91 L13.03,474.62 L13.54,472.33 L14.08,470.05 L14.67,467.78 L15.30,465.51 L15.97,463.25 L16.67,461.01 L17.42,458.77 L18.20,456.54 L19.03,454.32 L19.89,452.12 L20.80,449.92 L21.74,447.74 L22.72,445.57 L23.74,443.41 L24.80,441.26 L25.90,439.13 L27.04,437.01 L28.21,434.91 L29.42,432.82 L30.68,430.74 L31.97,428.68 L33.29,426.64 L34.66,424.61 L36.06,422.60 L37.50,420.61 L38.98,418.63 L40.49,416.68 L42.04,414.74 L43.63,412.82 L45.26,410.92 L46.92,409.04 L48.61,407.17 L50.35,405.33 L52.12,403.51 L53.92,401.72 L55.76,399.94 L57.64,398.18 L59.55,396.45 L61.50,394.74 L63.48,393.06 L65.49,391.40 L67.54,389.76 L69.63,388.14 L70.05,387.83 L71.74,386.57 L73.87,385.05 L76.02,383.58 L78.20,382.13 L80.43,380.68 L82.71,379.24 L85.05,377.77 L87.46,376.26 L89.96,374.70 L92.56,373.06 L95.27,371.35 L98.07,369.58 L100.95,367.80 L103.89,366.03 L106.87,364.30 L109.86,362.63 L112.90,361.00 L116.01,359.38 L119.15,357.79 L122.31,356.26 L125.47,354.83 L126.10,354.56 L128.66,353.45 L131.92,352.06 L135.14,350.82 L138.18,349.86 L139.32,349.59 L140.98,349.26 L143.69,348.82 L146.33,348.51 L148.91,348.33 L151.43,348.27 L153.88,348.31 L156.27,348.47 L158.61,348.72 L159.98,348.91 L160.88,349.06 L163.09,349.51 L165.23,350.05 L167.31,350.69 L168.91,351.27 L169.30,351.42 L171.22,352.25 L173.07,353.16 L174.88,354.13 L176.69,355.12 L178.51,356.11 L180.38,357.07 L180.76,357.26" stroke="#ff0000"/>
<path d="M83.30,721.28 L81.24,721.43 L79.18,721.58 L77.12,721.72 L75.07,721.85 L73.03,721.95 L70.98,722.03 L68.94,722.08 L66.89,722.10 L65.25,722.08 L64.85,722.07 L62.80,722.00 L60.75,721.89 L58.71,721.75 L56.66,721.57 L54.63,721.36 L52.60,721.13 L50.57,720.88 L48.56,720.61 L46.55,720.33 L44.56,720.04 L42.57,719.75 L40.99,719.51 L40.59,719.45 L38.62,719.15 L36.66,718.84 L34.71,718.52 L32.77,718.18 L30.83,717.84 L28.91,717.48 L26.99,717.10 L25.08,716.71 L23.18,716.31 L21.28,715.89 L19.40,715.45 L17.52,715.00 L15.65,714.52 L13.79,714.04 L11.94,713.53 L10.10,713.00" stroke="#ff0000"/>
<path d="M10.10,502.50 L10.12,499.99 L10.19,497.48 L10.30,494.97 L10.45,492.46 L10.65,489.95 L10.89,487.44 L11.17,484.94 L11.50,482.44 L11.87,479.95 L12.29,477.46 L12.75,474.98 L13.25,472.50 L13.80,470.03 L14.39,467.57 L15.02,465.11 L15.70,462.66 L16.42,460.23 L17.18,457.80 L17.99,455.38 L18.83,452.97 L19.72,450.58 L20.66,448.19 L21.63,445.82 L22.65,443.46 L23.71,441.12 L24.81,438.79 L25.95,436.48 L27.13,434.18 L28.36,431.89 L29.63,429.63 L30.93,427.38 L32.28,425.15 L33.67,422.94 L35.10,420.74 L36.56,418.57 L38.07,416.41 L39.62,414.28 L41.20,412.17 L42.83,410.08 L44.49,408.01 L46.19,405.96 L47.93,403.94 L49.71,401.94 L51.53,399.97 L53.38,398.02 L55.27,396.09 L57.19,394.20 L59.15,392.33 L61.15,390.48 L63.18,388.66 L65.25,386.88 L67.35,385.12 L69.49,383.38 L69.92,383.04 L71.65,381.70 L73.81,380.11 L75.99,378.57 L78.20,377.07 L80.45,375.58 L82.76,374.07 L85.14,372.52 L87.61,370.91 L90.19,369.21 L92.96,367.28 L95.96,365.09 L99.09,362.81 L102.27,360.57 L105.39,358.53 L108.36,356.83 L110.01,356.03 L111.07,355.59 L113.62,354.66 L116.07,353.93 L118.46,353.36 L120.81,352.89 L123.16,352.46 L125.56,352.03 L128.04,351.55 L130.11,351.09 L130.64,350.96 L133.39,350.25 L136.27,349.45 L139.24,348.59 L142.28,347.74 L145.35,346.91 L148.41,346.17 L151.44,345.53 L154.38,345.04 L157.21,344.74 L159.89,344.66 L162.45,344.73 L164.98,344.89 L167.47,345.13 L169.90,345.47 L172.25,345.91 L174.53,346.46 L176.71,347.13 L178.79,347.92 L180.74,348.85 L182.59,349.89 L184.39,350.99 L186.19,352.10 L186.56,352.32" stroke="#ff0000"/>
<path d="M94.48,754.68 L92.13,754.96 L89.76,755.15 L87.38,755.26 L84.99,755.33 L82.61,755.37 L80.24,755.41 L77.89,755.48 L76.95,755.52 L75.55,755.58 L73.23,755.68 L70.91,755.78 L68.59,755.86 L66.29,755.94 L63.98,756.00 L61.69,756.06 L59.39,756.09 L57.11,756.12 L54.82,756.12 L52.54,756.11 L50.26,756.08 L47.99,756.04 L45.72,755.96 L43.46,755.87 L41.20,755.75 L38.94,755.61 L37.59,755.51 L36.69,755.44 L34.44,755.25 L32.19,755.04 L29.96,754.82 L27.73,754.57 L25.50,754.30 L23.28,754.02 L21.07,753.71 L18.86,753.39 L16.66,753.05 L14.47,752.68 L12.28,752.30 L10.10,751.90" stroke="#ff0000"/>
<path d="M10.10,502.50 L10.12,499.79 L10.19,497.07 L10.31,494.35 L10.48,491.63 L10.69,488.91 L10.95,486.19 L11.26,483.47 L11.62,480.76 L12.02,478.04 L12.48,475.33 L12.98,472.63 L13.52,469.93 L14.12,467.23 L14.76,464.55 L15.45,461.87 L16.19,459.20 L16.97,456.54 L17.80,453.90 L18.67,451.26 L19.60,448.63 L20.57,446.02 L21.58,443.43 L22.64,440.84 L23.75,438.28 L24.90,435.73 L26.10,433.20 L27.34,430.68 L28.63,428.19 L29.96,425.71 L31.33,423.26 L32.75,420.82 L34.21,418.41 L35.72,416.02 L37.26,413.66 L38.85,411.32 L40.48,409.00 L42.15,406.71 L43.86,404.45 L45.61,402.22 L47.40,400.01 L49.23,397.83 L51.10,395.68 L53.01,393.57 L54.95,391.48 L56.94,389.43 L58.96,387.40 L61.01,385.42 L63.10,383.46 L65.22,381.54 L66.52,380.40 L67.38,379.66 L69.56,377.83 L71.77,376.06 L74.00,374.33 L76.27,372.64 L78.57,370.98 L80.91,369.33 L83.29,367.69 L85.73,366.06 L88.23,364.41 L90.79,362.74 L93.41,361.08 L96.06,359.44 L98.74,357.86 L101.42,356.35 L104.11,354.94 L106.24,353.89 L106.77,353.64 L109.39,352.49 L111.99,351.44 L114.63,350.41 L116.25,349.77 L117.36,349.31 L120.22,348.11 L123.16,346.88 L126.12,345.71 L129.03,344.68 L131.27,344.01 L131.82,343.87 L134.54,343.22 L137.23,342.68 L139.86,342.25 L142.45,341.95 L144.98,341.76 L145.97,341.72 L147.44,341.70 L149.83,341.76 L152.17,341.91 L154.49,342.14 L156.78,342.43 L159.07,342.75 L160.92,343.02 L161.38,343.09 L163.69,343.45 L166.00,343.85 L168.30,344.30 L170.60,344.78 L172.87,345.31 L175.13,345.89 L176.03,346.13 L177.37,346.51 L179.60,347.18 L181.81,347.89 L184.00,348.65 L186.17,349.44 L188.33,350.28 L188.76,350.45" stroke="#ff0000"/>
<path d="M103.93,782.92 L101.32,783.25 L98.70,783.50 L96.07,783.68 L93.43,783.82 L90.80,783.93 L88.18,784.04 L85.57,784.17 L85.05,784.20 L82.98,784.32 L80.40,784.48 L77.83,784.63 L75.27,784.77 L72.70,784.89 L70.15,784.99 L67.59,785.06 L65.03,785.10 L62.47,785.09 L61.96,785.08 L59.92,785.03 L57.36,784.93 L54.81,784.78 L52.26,784.60 L49.72,784.39 L47.18,784.15 L44.65,783.89 L42.13,783.61 L39.62,783.32 L37.11,783.03 L34.62,782.73 L32.63,782.50 L32.13,782.44 L29.65,782.14 L27.19,781.84 L24.72,781.53 L22.27,781.21 L19.82,780.87 L17.38,780.51 L14.95,780.13 L12.52,779.73 L10.10,779.30" stroke="#ff0000"/>
<path d="M10.10,502.50 L10.12,499.73 L10.20,496.95 L10.32,494.17 L10.49,491.39 L10.71,488.61 L10.97,485.83 L11.29,483.05 L11.65,480.27 L12.07,477.50 L12.53,474.73 L13.04,471.96 L13.60,469.20 L14.21,466.45 L14.86,463.71 L15.57,460.97 L16.32,458.24 L17.12,455.52 L17.97,452.82 L18.86,450.12 L19.81,447.44 L20.80,444.77 L21.84,442.12 L22.92,439.48 L24.05,436.85 L25.23,434.25 L26.45,431.66 L27.72,429.09 L29.04,426.54 L30.40,424.01 L31.80,421.50 L33.25,419.01 L34.75,416.55 L36.28,414.10 L37.86,411.69 L39.49,409.29 L41.15,406.93 L42.86,404.59 L44.61,402.27 L46.40,399.99 L48.23,397.73 L50.10,395.51 L52.01,393.31 L53.96,391.14 L55.95,389.01 L57.98,386.91 L60.04,384.84 L62.14,382.81 L64.28,380.81 L66.45,378.84 L67.77,377.68 L68.66,376.91 L70.90,375.03 L73.17,373.19 L75.47,371.40 L77.79,369.64 L80.15,367.93 L82.55,366.25 L84.97,364.61 L87.43,363.00 L89.92,361.42 L92.45,359.86 L95.01,358.35 L97.60,356.87 L100.21,355.45 L102.84,354.08 L105.48,352.78 L107.60,351.79 L108.13,351.55 L110.75,350.43 L113.38,349.39 L116.04,348.35 L117.68,347.71 L118.80,347.27 L121.68,346.08 L124.63,344.86 L127.61,343.70 L130.53,342.68 L132.79,342.03 L133.34,341.89 L136.08,341.25 L138.79,340.71 L141.45,340.29 L144.06,340.00 L146.59,339.84 L147.58,339.81 L149.05,339.82 L151.43,339.92 L153.76,340.13 L156.05,340.41 L158.32,340.75 L160.59,341.11 L162.43,341.42 L162.89,341.49 L165.21,341.88 L167.54,342.29 L169.86,342.74 L172.16,343.24 L174.42,343.81 L176.63,344.47 L177.49,344.76 L178.75,345.23 L180.81,346.07 L182.82,346.98 L184.80,347.94 L186.79,348.91 L188.80,349.87 L189.21,350.06" stroke="#ff0000"/>
<path d="M116.32,819.96 L113.29,820.07 L110.26,820.16 L107.24,820.22 L104.23,820.26 L101.22,820.27 L98.22,820.23 L95.22,820.17 L94.62,820.15 L92.22,820.05 L89.23,819.89 L86.25,819.68 L83.27,819.43 L80.30,819.16 L77.34,818.86 L74.40,818.55 L71.47,818.24 L68.56,817.93 L65.67,817.64 L62.79,817.36 L59.93,817.09 L57.08,816.83 L54.24,816.57 L51.41,816.29 L48.59,815.99 L45.78,815.67 L42.98,815.30 L40.18,814.90 L37.39,814.43 L34.61,813.91 L32.94,813.56 L31.83,813.32 L29.07,812.64 L26.31,811.90 L23.57,811.10 L20.85,810.25 L18.14,809.37 L15.44,808.46 L12.76,807.53 L10.10,806.60" stroke="#ff0000"/>
<path d="M10.10,502.50 L10.12,499.67 L10.20,496.83 L10.32,493.99 L10.50,491.15 L10.72,488.31 L10.99,485.47 L11.32,482.63 L11.69,479.79 L12.11,476.95 L12.58,474.13 L13.10,471.30 L13.68,468.48 L14.30,465.67 L14.97,462.86 L15.69,460.07 L16.46,457.28 L17.27,454.51 L18.14,451.74 L19.06,448.99 L20.02,446.25 L21.03,443.52 L22.09,440.81 L23.20,438.11 L24.36,435.43 L25.56,432.77 L26.81,430.12 L28.11,427.50 L29.45,424.89 L30.84,422.31 L32.27,419.74 L33.76,417.20 L35.28,414.68 L36.85,412.19 L38.47,409.72 L40.13,407.27 L41.83,404.85 L43.57,402.46 L45.36,400.10 L47.19,397.76 L49.06,395.46 L50.97,393.18 L52.93,390.94 L54.92,388.72 L56.95,386.54 L59.02,384.39 L61.13,382.28 L63.28,380.20 L65.46,378.15 L67.68,376.15 L69.03,374.96 L69.94,374.17 L72.24,372.23 L74.57,370.32 L76.93,368.46 L79.33,366.64 L81.75,364.87 L84.19,363.16 L86.65,361.51 L89.12,359.94 L91.61,358.43 L94.11,357.00 L96.62,355.62 L99.14,354.30 L101.69,353.03 L104.26,351.81 L106.86,350.62 L108.96,349.69 L109.48,349.46 L112.11,348.37 L114.76,347.34 L117.45,346.30 L119.11,345.66 L120.24,345.21 L123.16,344.00 L126.16,342.75 L129.19,341.56 L132.15,340.53 L134.43,339.88 L134.98,339.75 L137.73,339.14 L140.44,338.64 L143.10,338.26 L145.69,338.02 L148.21,337.91 L149.20,337.90 L150.65,337.93 L153.03,338.08 L155.35,338.33 L157.63,338.65 L159.89,339.04 L162.13,339.46 L163.94,339.82 L164.39,339.91 L166.67,340.37 L168.95,340.85 L171.22,341.38 L173.46,341.97 L175.65,342.63 L177.76,343.40 L178.58,343.73 L179.78,344.27 L181.71,345.25 L183.58,346.30 L185.43,347.38 L187.29,348.47 L189.20,349.53 L189.59,349.74" stroke="#ff0000"/>
<path d="M135.54,877.39 L131.88,877.31 L128.17,876.97 L124.42,876.43 L120.67,875.77 L116.93,875.06 L113.23,874.37 L109.59,873.78 L108.86,873.69 L106.00,873.31 L102.44,872.84 L98.90,872.38 L95.38,871.91 L91.89,871.43 L88.41,870.94 L84.96,870.42 L81.51,869.89 L78.09,869.33 L74.68,868.73 L71.28,868.10 L67.90,867.42 L64.53,866.70 L61.18,865.92 L57.83,865.08 L54.51,864.18 L51.20,863.22 L47.91,862.21 L44.63,861.15 L41.38,860.03 L38.15,858.88 L34.94,857.68 L31.75,856.45 L28.58,855.18 L25.44,853.88 L22.32,852.55 L19.23,851.19 L16.16,849.81 L13.12,848.41 L10.10,847.00" stroke="#ff0000"/>
</g>
<g stroke="#ffffff" stroke-opacity="0.68" stroke-width="1" fill="none">
<ellipse cx="9.50" cy="502.50" rx="75.00" ry="74.83"/>
<ellipse cx="9.50" cy="502.50" rx="150.00" ry="149.67"/>
<ellipse cx="9.50" cy="502.50" rx="225.00" ry="224.50"/>
<ellipse cx="9.50" cy="502.50" rx="300.00" ry="299.33"/>
<ellipse cx="9.50" cy="502.50" rx="375.00" ry="374.17"/>
<ellipse cx="9.50" cy="502.50" rx="450.00" ry="449.00"/>
<line x1="9.50" y1="502.50" x2="9.50" y2="53.50"/>
<line x1="9.50" y1="502.50" x2="125.97" y2="68.80"/>
<line x1="9.50" y1="502.50" x2="234.50" y2="113.65"/>
<line x1="9.50" y1="502.50" x2="327.70" y2="185.01"/>
<line x1="9.50" y1="502.50" x2="399.21" y2="278.00"/>
<line x1="9.50" y1="502.50" x2="444.17" y2="386.29"/>
<line x1="9.50" y1="502.50" x2="459.50" y2="502.50"/>
<line x1="9.50" y1="502.50" x2="444.17" y2="618.71"/>
<line x1="9.50" y1="502.50" x2="399.21" y2="727.00"/>
<line x1="9.50" y1="502.50" x2="327.70" y2="819.99"/>
<line x1="9.50" y1="502.50" x2="234.50" y2="891.35"/>
<line x1="9.50" y1="502.50" x2="125.97" y2="936.20"/>
<line x1="9.50" y1="502.50" x2="9.50" y2="951.50"/>
</g>
<g fill="#ffffff" font-size="10.4">
<text transform="translate(10.2,502.1) scale(0.87,1)">0</text>
<text transform="translate(10.2,427.3) scale(0.87,1)">2</text>
<text transform="translate(10.2,352.5) scale(0.87,1)">4</text>
<text transform="translate(10.2,277.6) scale(0.87,1)">6</text>
<text transform="translate(10.2,202.8) scale(0.87,1)">8</text>
<text transform="translate(10.2,128.0) scale(0.87,1)">10</text>
<text transform="translate(10.2,53.2) scale(0.87,1)">12</text>
<text transform="translate(129.3,54.8) scale(0.87,1)">15°</text>
<text transform="translate(241.0,101.1) scale(0.87,1)">30°</text>
<text transform="translate(337.0,174.8) scale(0.87,1)">45°</text>
<text transform="translate(410.7,270.7) scale(0.87,1)">60°</text>
<text transform="translate(457.0,382.5) scale(0.87,1)">75°</text>
<text transform="translate(472.8,502.5) scale(0.87,1)">90°</text>
<text transform="translate(457.0,622.5) scale(0.87,1)">105°</text>
<text transform="translate(410.7,734.2) scale(0.87,1)">120°</text>
<text transform="translate(337.0,830.2) scale(0.87,1)">135°</text>
<text transform="translate(241.0,903.9) scale(0.87,1)">150°</text>
<text transform="translate(129.3,950.2) scale(0.87,1)">165°</text>
<text transform="translate(9.3,966.0) scale(0.87,1)">180°</text>
</g>
</g>

<!-- panel -->
<rect x="635.5" y="41.5" width="267" height="922" fill="none" stroke="#2a2a2a" stroke-width="1"/>
<rect x="645.5" y="53.5" width="9" height="9" fill="#262626" stroke="#c0c0c0" stroke-width="1"/>
<path d="M646.6,58.2 L649.3,61.2 L653.8,54.4" stroke="#30b030" stroke-width="2.3" fill="none"/><path d="M646.9,58.4 L649.3,61 L653.6,54.6" stroke="#90e890" stroke-width="0.9" fill="none"/>
<text x="660" y="63" font-size="11" fill="#fff" style="letter-spacing:-0.3px">Tous les TWS</text>
<path d="M651,79.5 L893.5,79.5 Q892.5,79.5 892.5,81 L892.5,146 Q892.5,147.5 891,147.5 L647,147.5 Q645.5,147.5 645.5,146 L645.5,81 Q645.5,79.5 647,79.5 L649,79.5" fill="none" stroke="#6e6e6e" stroke-width="1"/>
<rect x="648" y="74" width="46" height="10" fill="#353535"/>
<text x="649.5" y="85" font-size="11" fill="#fff" style="letter-spacing:-0.6px">Pas TWS</text>
<rect x="655.5" y="98.5" width="227" height="38.5" rx="2" fill="#2e2e2e" stroke="#262626" stroke-width="1"/>
<rect x="658.5" y="100.5" width="207" height="34.5" rx="2" fill="#353535" stroke="#2a2a2a" stroke-width="1"/>
<rect x="868.5" y="99.5" width="13" height="37" rx="2" fill="#464646" stroke="#404040" stroke-width="1"/>
<path d="M871,112 L875,107.5 L879,112 Z" fill="#a0a0a0"/>
<path d="M871,124.8 L875,129 L879,124.8 Z" fill="#8a8a8a"/>
<text x="861" y="128.5" font-size="27.4" fill="#fff" text-anchor="end">5,00 nds</text>
<g font-size="11" fill="#fff">
<text x="645" y="166" style="letter-spacing:-0.15px">Vitesse max absolue: 10.88nds</text>
<text x="645" y="179" style="letter-spacing:-0.02px">TWS:35.00 nds TWA:150.00°</text>
</g>
<g font-size="11" style="letter-spacing:-0.35px">
<text x="645" y="205" fill="#0000ff">TWS 5 kts</text>
<text x="645" y="218" fill="#00ff00">TWS 10 kts</text>
<text x="645" y="231" fill="#ffff00">TWS 15 kts</text>
<text x="645" y="244" fill="#ff00ff">TWS 20 kts</text>
<text x="645" y="257" fill="#fa8072">TWS 25 kts</text>
<text x="645" y="270" fill="#808080">TWS 30 kts</text>
<text x="645" y="283" fill="#ff7f00">TWS 35 kts</text>
</g>
</svg>
</body></html>
